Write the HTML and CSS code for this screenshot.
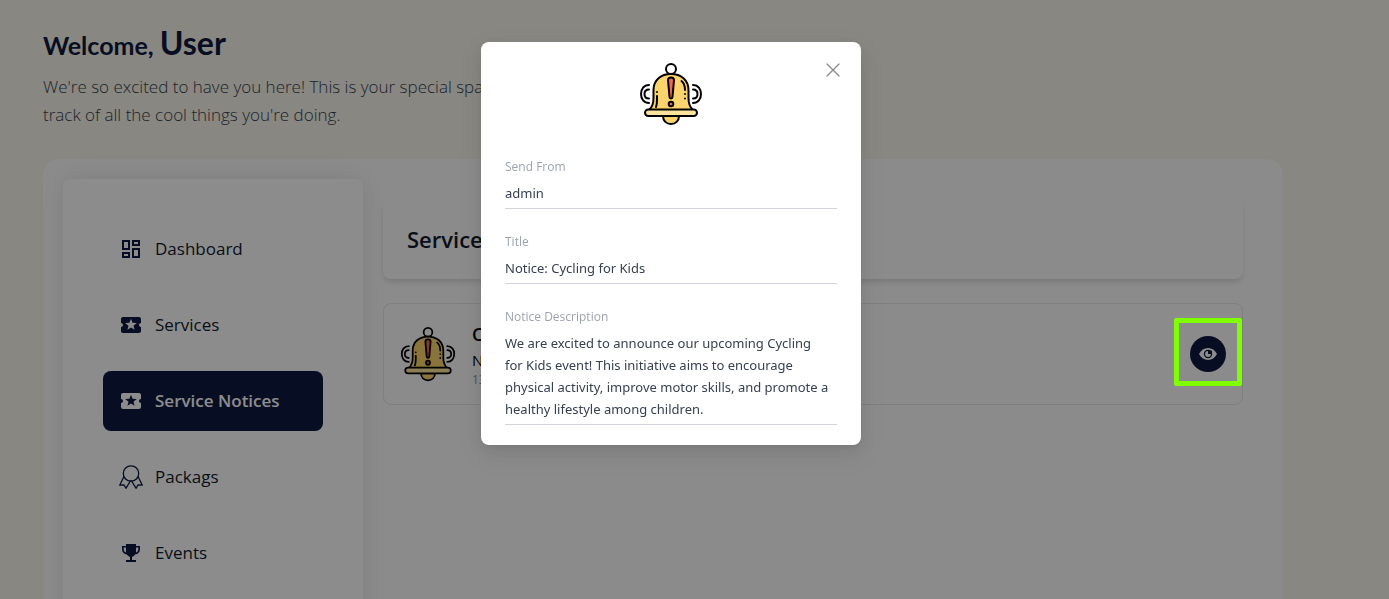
FILE: index.html
```html
<!DOCTYPE html>
<html lang="en">
<head>
<meta charset="utf-8">
<meta name="viewport" content="width=device-width, initial-scale=1">
<title>Service Notices</title>
<link rel="stylesheet" href="styles.css">
</head>
<body class="modal-open">
<svg class="sprite" aria-hidden="true">
  <symbol id="bell" viewBox="-1 -1 64 64">
    <g fill="none" stroke="#000" stroke-width="2" stroke-linecap="round" stroke-linejoin="round">
      <path d="M9 22C4 22 1 26 1 31s3 9 8 9M9 26.500c-3 0-4.500 2-4.500 4.500s1.500 4.500 4.500 4.500M53 22c5 0 8 4 8 9s-3 9-8 9M53 26.500c3 0 4.500 2 4.500 4.500s-1.500 4.500-4.500 4.500"/>
      <circle cx="31" cy="6" r="5" fill="#fff"/>
      <path d="M23 53c0 5 3.500 8 8 8s8-3 8-8z" fill="#fbd46d"/>
      <path d="M9 47c3.500-3 4.500-7 4.500-12v-8c0-10 7.500-16 17.500-16s17.500 6 17.500 16v8c0 5 1 9 4.500 12z" fill="#fbd46d"/>
      <rect x="5" y="46.500" width="52" height="6.500" rx="3.250" fill="#fde49c"/>
      <path d="M28 17c0-3.500 6-3.500 6 0l-1.500 17c-.2 2-2.800 2-3 0z" fill="#f2664f"/>
      <circle cx="31" cy="41" r="2.300" fill="#f2664f"/>
      <path d="M17 29v.1M17 33v4c0 3 0 5-1 7M41.500 18c2.500 2 3.500 5 3.500 9M45 31v.1M45 35.500v.1"/>
    </g>
  </symbol>
  <symbol id="ticket" viewBox="0 0 24 24">
    <path fill="currentColor" d="M20 12c0-1.100.9-2 2-2V6c0-1.100-.9-2-2-2H4c-1.100 0-1.990.9-1.990 2v4c1.100 0 1.990.9 1.990 2s-.89 2-2 2v4c0 1.100.9 2 2 2h16c1.100 0 2-.9 2-2v-4c-1.100 0-2-.9-2-2zm-4.420 4.800L12 14.500l-3.580 2.300 1.080-4.120-3.290-2.690 4.240-.25L12 5.800l1.540 3.950 4.240.25-3.290 2.690 1.090 4.110z"/>
  </symbol>
</svg>

<div class="page">
  <header class="intro">
    <h1 class="greeting">Welcome, <strong class="greeting-name">User</strong></h1>
    <p class="intro-text">We're so excited to have you here! This is your special space to keep<br>track of all the cool things you're doing.</p>
  </header>

  <div class="panel">
    <nav class="sidebar" aria-label="Account">
      <a class="nav-item" href="#dashboard">
        <svg class="nav-icon" viewBox="0 0 24 24" aria-hidden="true"><path fill="currentColor" d="M19 5v2h-4V5h4M9 5v6H5V5h4m10 8v6h-4v-6h4M9 17v2H5v-2h4M21 3h-8v6h8V3zM11 3H3v10h8V3zm10 8h-8v10h8V11zm-10 4H3v6h8v-6z"/></svg>
        Dashboard
      </a>
      <a class="nav-item" href="#services">
        <svg class="nav-icon" aria-hidden="true"><use href="#ticket"/></svg>
        Services
      </a>
      <a class="nav-item nav-item-active" href="#notices" aria-current="page">
        <svg class="nav-icon" aria-hidden="true"><use href="#ticket"/></svg>
        Service Notices
      </a>
      <a class="nav-item" href="#packages">
        <svg class="nav-icon" viewBox="0 0 24 24" aria-hidden="true"><g fill="none" stroke="currentColor" stroke-width="1.300" stroke-linejoin="round" stroke-linecap="round"><circle cx="12" cy="8.500" r="7.700"/><path d="M4.700 12L.7 20.200l4.200-.4 2 3.500L11.400 16M19.300 12l4 8.200-4.200-.4-2 3.500L12.600 16"/></g></svg>
        Packags
      </a>
      <a class="nav-item" href="#events">
        <svg class="nav-icon" viewBox="0 0 24 24" aria-hidden="true"><path fill="currentColor" d="M21 5h-4V3H7v2H3v3c0 3.200 2 5 4.900 5.600.8 1.200 1.800 2 3.100 2.300V19H7v2h10v-2h-4v-3.100c1.300-.3 2.300-1.100 3.100-2.300C19 13 21 11.200 21 8zM4.700 8V6.600H7v5C5.500 11 4.700 9.800 4.700 8zm14.600 0c0 1.800-.8 3-2.300 3.600v-5h2.300z"/></svg>
        Events
      </a>
    </nav>

    <main class="content">
      <h2 class="section-title">Service Notices</h2>
      <article class="notice">
        <svg class="notice-bell" aria-hidden="true"><use href="#bell"/></svg>
        <div class="notice-body">
          <h3 class="notice-title">Cycling for Kids</h3>
          <p class="notice-text">Notice: Cycling for Kids</p>
          <p class="notice-date">13 May 2024</p>
        </div>
        <div class="notice-action">
          <button class="view-button" type="button" aria-label="View notice">
            <svg class="view-icon" viewBox="0 0 18 18" aria-hidden="true"><path fill="currentColor" d="M0 9c2-3.800 5.200-6 9-6s7 2.200 9 6c-2 3.800-5.200 6-9 6s-7-2.200-9-6z"/><circle cx="9" cy="9" r="4.200" fill="#0d1a40"/><circle cx="9" cy="9" r="2.900" fill="currentColor"/><path fill="#0d1a40" d="M9 9V5.500h3.800V9z"/></svg>
          </button>
          <span class="highlight"></span>
        </div>
      </article>
    </main>
  </div>
</div>

<div class="overlay">
  <section class="modal" role="dialog" aria-modal="true" aria-label="Notice details">
    <button class="close-button" type="button" aria-label="Close">
      <svg class="close-icon" viewBox="0 0 14 14" aria-hidden="true"><path d="M1 1l12 12M13 1L1 13" fill="none" stroke="currentColor" stroke-width="1.300" stroke-linecap="round"/></svg>
    </button>
    <svg class="modal-bell" aria-hidden="true"><use href="#bell"/></svg>
    <dl class="fields">
      <div class="field"><dt class="field-label">Send From</dt><dd class="field-value">admin</dd></div>
      <div class="field"><dt class="field-label">Title</dt><dd class="field-value">Notice: Cycling for Kids</dd></div>
      <div class="field"><dt class="field-label">Notice Description</dt><dd class="field-value">We are excited to announce our upcoming Cycling<br>for Kids event! This initiative aims to encourage<br>physical activity, improve motor skills, and promote a<br>healthy lifestyle among children.</dd></div>
    </dl>
  </section>
</div>
</body>
</html>
```
FILE: styles.css
```css
*, *::before, *::after { box-sizing: border-box; }
h1, h2, h3, p, dl, dd { margin: 0; }
body {
  margin: 0;
  min-height: 100vh;
  background: #f8f6eb;
  color: #111b2e;
  font-family: "Open Sans", "Noto Sans", sans-serif;
}
.modal-open { height: 100vh; overflow: hidden; }
.sprite { display: block; width: 0; height: 0; }
.page { padding: 25px 106px 40px 43px; }

.intro { padding-bottom: 30px; }
.greeting {
  color: #0d1a40;
  font: 700 25px/40px Lato, "Open Sans", sans-serif;
}
.greeting-name { font-size: 32px; font-weight: 700; line-height: 32px; }
.intro-text {
  margin-top: 8px;
  color: #374151;
  font-size: 17px;
  font-weight: 300;
  line-height: 28px;
}

.panel {
  display: flex;
  align-items: flex-start;
  gap: 20px;
  padding: 20px 40px 40px 20px;
  border-radius: 16px;
  background: #fefefe;
}
.sidebar {
  display: flex;
  flex: 0 0 300px;
  flex-direction: column;
  gap: 16px;
  min-height: 600px;
  padding: 40px;
  border-radius: 8px;
  background: #fff;
  box-shadow: 0 0 28px rgba(0, 0, 0, 0.1);
}
.nav-item {
  display: flex;
  align-items: center;
  gap: 12px;
  height: 60px;
  padding: 0 16px;
  border-radius: 8px;
  color: #111b2e;
  font-size: 17px;
  font-weight: 500;
  line-height: 24px;
  text-decoration: none;
}
.nav-icon { width: 24px; height: 24px; color: #0d1a40; }
.nav-item-active { background: #0d1a40; color: #fff; font-weight: 600; }
.nav-item-active .nav-icon { color: #fff; }

.content {
  display: flex;
  flex: 1;
  flex-direction: column;
  gap: 24px;
  padding-top: 20px;
}
.section-title {
  padding: 22px 24px;
  border-radius: 8px;
  box-shadow: 0 4px 6px -1px rgba(0, 0, 0, 0.14);
  background: #fefefe;
  font-size: 22px;
  font-weight: 600;
  line-height: 36px;
}
.notice {
  display: flex;
  align-items: center;
  gap: 16px;
  padding: 16px;
  border: 1px solid #e5e7eb;
  border-radius: 8px;
}
.notice-bell { width: 56px; height: 56px; }
.notice-body { flex: 1; color: #000; }
.notice-title { font-size: 18px; font-weight: 600; line-height: 28px; }
.notice-text { font-size: 15px; line-height: 24px; }
.notice-date { color: #8b8f98; font-size: 12px; line-height: 16px; }
.notice-action { position: relative; }
.view-button {
  display: grid;
  place-items: center;
  width: 36px;
  height: 36px;
  padding: 0;
  border: 0;
  border-radius: 50%;
  background: #0d1a40;
  color: #fff;
}
.view-icon { width: 18px; height: 18px; }
.highlight {
  position: absolute;
  inset: -18px -16px -14px;
  z-index: 20;
  border: 5px solid #80ff00;
  border-radius: 2px;
  pointer-events: none;
}

.overlay {
  position: fixed;
  inset: 0;
  z-index: 10;
  display: flex;
  align-items: flex-start;
  justify-content: center;
  padding: 42px 47px 0 0;
  background: rgba(0, 0, 0, 0.45);
}
.modal {
  position: relative;
  width: 380px;
  padding: 20px 24px;
  border-radius: 8px;
  background: #fff;
  box-shadow: 0 6px 16px rgba(0, 0, 0, 0.08), 0 3px 6px -4px rgba(0, 0, 0, 0.12), 0 9px 28px 8px rgba(0, 0, 0, 0.05);
}
.close-button {
  position: absolute;
  top: 17px;
  right: 17px;
  display: grid;
  place-items: center;
  width: 22px;
  height: 22px;
  padding: 0;
  border: 0;
  background: none;
  color: #888;
}
.close-icon { width: 14px; height: 14px; }
.modal-bell { display: block; width: 64px; height: 64px; margin: 0 auto 32px; }
.fields { display: grid; gap: 24px; }
.field { padding-bottom: 4px; border-bottom: 1px solid #d1d5db; }
.field-label { margin-bottom: 6px; color: #9ca3af; font-size: 12px; line-height: 18px; }
.field-value {
  color: #374151;
  font-family: "Noto Sans", "Open Sans", sans-serif;
  font-size: 13px;
  line-height: 22px;
}
```
